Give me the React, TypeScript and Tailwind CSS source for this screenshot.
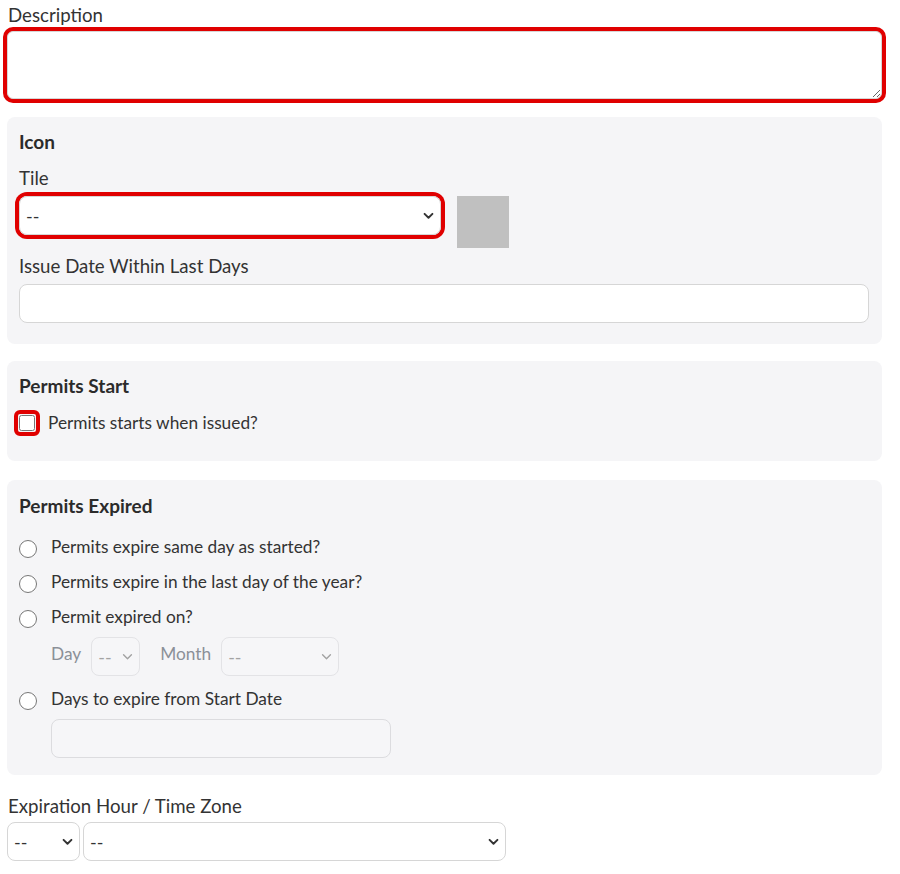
import React from 'react';

function Chevron({ muted = false }: { muted?: boolean }) {
  return (
    <svg
      viewBox="0 0 12 8"
      className={`pointer-events-none absolute right-[7px] top-1/2 h-[7px] w-[11px] -translate-y-1/2 ${muted ? 'text-[#a3a3a3]' : 'text-[#333]'}`}
      fill="none"
      stroke="currentColor"
      strokeWidth={muted ? 1.6 : 2.2}
      strokeLinecap="round"
      strokeLinejoin="round"
    >
      <path d="M1.5 1.5 6 6l4.5-4.5" />
    </svg>
  );
}

function Select({ className = '', disabled = false }: { className?: string; disabled?: boolean }) {
  return (
    <div className={`relative h-[39px] ${className}`}>
      <select
        disabled={disabled}
        className={`h-full w-full appearance-none rounded-lg border pl-[6px] pr-6 text-[18px] leading-[22px] outline-none ${
          disabled ? 'border-[#e3e3e6] bg-[#f6f6f8] text-[#a3a3a3]' : 'border-[#d6d6d6] bg-white text-[#333]'
        }`}
      >
        <option>--</option>
      </select>
      <Chevron muted={disabled} />
    </div>
  );
}

function Radio({ label }: { label: string }) {
  return (
    <label className="flex items-start gap-[14px] text-[17.3px]">
      <input type="radio" name="expire" className="m-0 mt-[4px] h-[18px] w-[18px] shrink-0" />
      <span>{label}</span>
    </label>
  );
}

function Panel({ title, className = '', children }: { title: string; className?: string; children: React.ReactNode }) {
  return (
    <section className={`rounded-lg bg-[#f5f5f7] px-3 ${className}`}>
      <h3 className="text-[19px] font-bold text-[#2b2b2b]">{title}</h3>
      {children}
    </section>
  );
}

export default function App() {
  return (
    <div className="min-h-[874px] bg-white pt-[4px] text-[18.67px] leading-[22px] text-[#333] [font-family:Lato,'Noto_Sans',sans-serif]">
      <div className="ml-[7px] w-[875px]">
        <label className="block pl-px">Description</label>
        <textarea className="mt-[5px] block h-[68px] w-full rounded-md border border-[#d6d6d6] bg-white px-2 py-1 outline-none ring-4 ring-[#e00000]" />

        <Panel title="Icon" className="mt-[18px] pb-[21px] pt-[14px] pr-[13px]">
          <div className="mt-[14px]">Tile</div>
          <div className="mt-[7px] flex items-start gap-4">
            <div className="w-[422px] rounded-lg ring-4 ring-[#e00000]">
              <Select />
            </div>
            <div className="h-[52px] w-[52px] bg-[#c0c0c0]" />
          </div>
          <div className="mt-[7px]">Issue Date Within Last Days</div>
          <input type="text" className="mt-[7px] block h-[39px] w-full rounded-lg border border-[#d6d6d6] bg-white px-2 outline-none" />
        </Panel>

        <Panel title="Permits Start" className="mt-[17px] pb-[25px] pt-[14px]">
          <label className="mt-[13px] flex items-center gap-[8px] text-[17.3px]">
            <span className="-ml-[5px] flex rounded-[6px] border-4 border-[#e00000] p-px">
              <input type="checkbox" className="m-0 block h-4 w-4" />
            </span>
            <span>Permits starts when issued?</span>
          </label>
        </Panel>

        <Panel title="Permits Expired" className="mt-[19px] pb-[17px] pt-[15px]">
          <div className="mt-[19px] flex flex-col gap-[13px]">
            <Radio label="Permits expire same day as started?" />
            <Radio label="Permits expire in the last day of the year?" />
            <Radio label="Permit expired on?" />
          </div>
          <div className="ml-8 mt-[9px] flex items-center text-[17.3px] text-[#8b9098]">
            <span className="mb-[6px]">Day</span>
            <Select disabled className="ml-[10px] w-[49px]" />
            <span className="mb-[6px] ml-5">Month</span>
            <Select disabled className="ml-[10px] w-[118px]" />
          </div>
          <div className="mt-[12px]">
            <Radio label="Days to expire from Start Date" />
          </div>
          <input
            type="text"
            className="ml-8 mt-[9px] block h-[39px] w-[340px] rounded-lg border border-[#dcdcdf] bg-[#f6f6f8] px-2 outline-none"
          />
        </Panel>

        <div className="mt-[20px] pl-px">Expiration Hour / Time Zone</div>
        <div className="mt-[5px] flex gap-[3px]">
          <Select className="w-[73px]" />
          <Select className="w-[423px]" />
        </div>
      </div>
    </div>
  );
}
